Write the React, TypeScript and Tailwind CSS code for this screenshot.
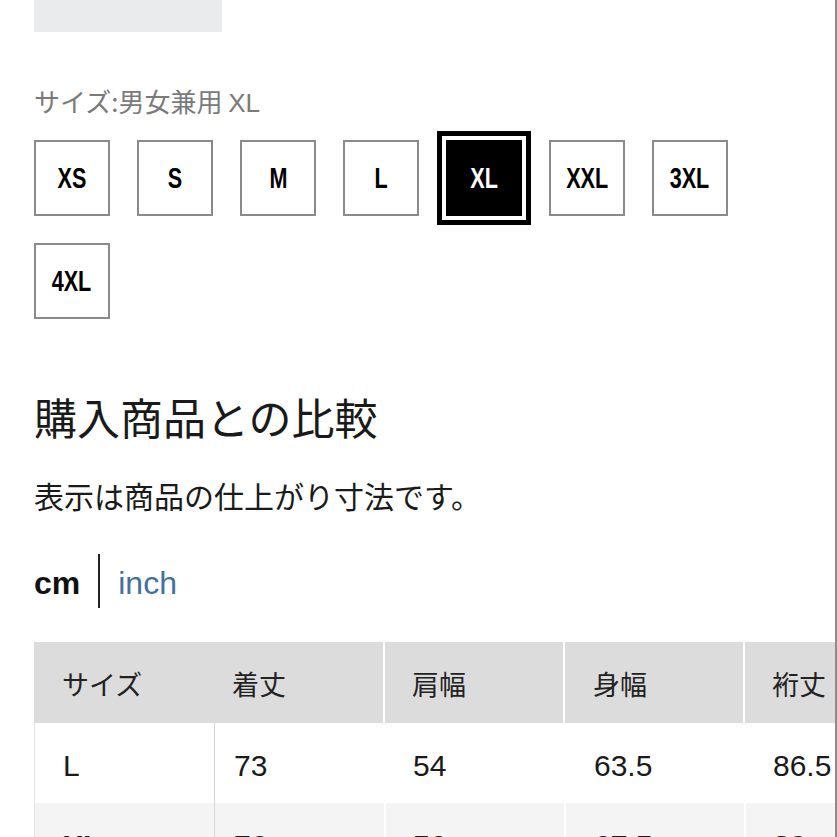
const sizes = ["XS", "S", "M", "L", "XL", "XXL", "3XL", "4XL"];
const selected = "XL";

const jp = "font-['Noto_Sans_CJK_JP','Noto_Sans',sans-serif]";
const num = "font-['Liberation_Sans','Noto_Sans_CJK_JP',sans-serif]";

// column layout for the size table
const cols = [
  { w: "w-[179px]", pl: "pl-[28px]" },
  { w: "w-[170px]", pl: "pl-[19px]" },
  { w: "w-[180px]", pl: "pl-[27px]" },
  { w: "w-[180px]", pl: "pl-[28px]" },
  { w: "w-[180px]", pl: "pl-[27px]" },
];

const header = ["サイズ", "着丈", "肩幅", "身幅", "裄丈"];
const rows = [
  { cells: ["L", "73", "54", "63.5", "86.5"], bold: false, bg: "bg-white" },
  { cells: ["XL", "76", "56", "67.5", "89"], bold: true, bg: "bg-[#f4f4f4]" },
];

const SizeBox = ({ label }: { label: string }) => {
  const active = label === selected;
  return (
    <div
      className={
        active
          ? "w-[76px] h-[76px] flex items-center justify-center bg-black text-white outline-[5px] outline-black outline-offset-[4px] outline-solid"
          : "w-[76px] h-[76px] flex items-center justify-center border-2 border-[#8a8a8a] bg-white text-black"
      }
    >
      {/* condensed look: squeeze a bold sans */}
      <span className="inline-block scale-x-[0.72] font-['Liberation_Sans',sans-serif] font-bold text-[30px] leading-none whitespace-nowrap">
        {label}
      </span>
    </div>
  );
};

export default function App() {
  return (
    <div className="w-[837px] h-[837px] overflow-hidden bg-white border-r-2 border-[#8c8c8c]">
      <div className="pl-[34px]">
        <div className="w-[188px] h-[32px] bg-[#e9ebed]" />

        <p className={`${jp} mt-[53px] text-[26px] leading-[32px] text-[#7a7a7a]`}>
          サイズ:男女兼用 <span className={num}>XL</span>
        </p>

        <div className="mt-[21px] w-[740px] flex flex-wrap gap-[27px]">
          {sizes.map((s) => (
            <SizeBox key={s} label={s} />
          ))}
        </div>

        <h2 className={`${jp} mt-[69px] text-[43px] leading-[56px] text-[#1a1a1a] font-normal`}>
          購入商品との比較
        </h2>

        <p className={`${jp} mt-[31px] text-[30px] leading-[40px] text-[#1a1a1a]`}>
          表示は商品の仕上がり寸法です。
        </p>

        <div className={`${num} mt-[39px] h-[54px] flex items-center text-[32px]`}>
          <span className="font-bold text-[#111] pt-[4px]">cm</span>
          <span className="mx-[18px] w-[2px] h-[54px] bg-[#222]" />
          <span className="text-[#44709f] pt-[4px]">inch</span>
        </div>

        <div className="mt-[34px] w-[900px]">
          <div className="flex h-[81px] bg-[#dcdcdc]">
            {header.map((h, i) => (
              <div
                key={h}
                className={`${cols[i].w} ${cols[i].pl} ${
                  i >= 2 ? "border-l-2 border-white" : ""
                } flex items-center pt-[4px] ${jp} text-[27px] text-[#222]`}
              >
                {h}
              </div>
            ))}
          </div>
          {rows.map((r) => (
            <div key={r.cells[0]} className={`flex h-[80px] ${r.bg} border-l border-[#e2e2e2]`}>
              {r.cells.map((c, i) => (
                <div
                  key={i}
                  className={`${cols[i].w} ${cols[i].pl} flex items-center pt-[4px] ${num} text-[30px] text-[#1a1a1a] ${
                    r.bold ? "font-bold" : ""
                  } ${i === 1 ? "border-l border-[#d6d6d6]" : ""} ${
                    i >= 2 ? (r.bold ? "border-l-2 border-white" : "border-l-2 border-transparent") : ""
                  }`}
                >
                  {c}
                </div>
              ))}
            </div>
          ))}
        </div>
      </div>
    </div>
  );
}
